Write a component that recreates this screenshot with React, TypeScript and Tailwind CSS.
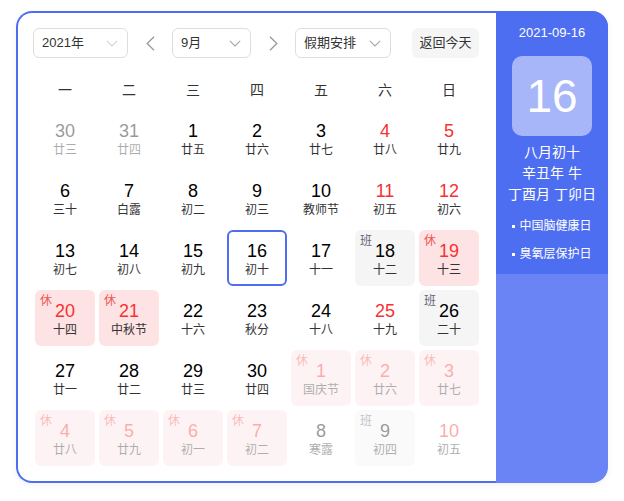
import React from "react";

type Cell = {
  d: number;
  l: string;
  red?: boolean;
  other?: boolean;
  tag?: "休" | "班";
  today?: boolean;
};

const cells: Cell[] = [
  { d: 30, l: "廿三", other: true },
  { d: 31, l: "廿四", other: true },
  { d: 1, l: "廿五" },
  { d: 2, l: "廿六" },
  { d: 3, l: "廿七" },
  { d: 4, l: "廿八", red: true },
  { d: 5, l: "廿九", red: true },
  { d: 6, l: "三十" },
  { d: 7, l: "白露" },
  { d: 8, l: "初二" },
  { d: 9, l: "初三" },
  { d: 10, l: "教师节" },
  { d: 11, l: "初五", red: true },
  { d: 12, l: "初六", red: true },
  { d: 13, l: "初七" },
  { d: 14, l: "初八" },
  { d: 15, l: "初九" },
  { d: 16, l: "初十", today: true },
  { d: 17, l: "十一" },
  { d: 18, l: "十二", tag: "班" },
  { d: 19, l: "十三", tag: "休" },
  { d: 20, l: "十四", tag: "休" },
  { d: 21, l: "中秋节", tag: "休" },
  { d: 22, l: "十六" },
  { d: 23, l: "秋分" },
  { d: 24, l: "十八" },
  { d: 25, l: "十九", red: true },
  { d: 26, l: "二十", tag: "班" },
  { d: 27, l: "廿一" },
  { d: 28, l: "廿二" },
  { d: 29, l: "廿三" },
  { d: 30, l: "廿四" },
  { d: 1, l: "国庆节", tag: "休", other: true },
  { d: 2, l: "廿六", tag: "休", other: true },
  { d: 3, l: "廿七", tag: "休", other: true },
  { d: 4, l: "廿八", tag: "休", other: true },
  { d: 5, l: "廿九", tag: "休", other: true },
  { d: 6, l: "初一", tag: "休", other: true },
  { d: 7, l: "初二", tag: "休", other: true },
  { d: 8, l: "寒露", other: true },
  { d: 9, l: "初四", tag: "班", other: true },
  { d: 10, l: "初五", red: true, other: true },
];

const weekdays = ["一", "二", "三", "四", "五", "六", "日"];

function ChevronDown({ light }: { light?: boolean }) {
  return (
    <svg width="12" height="7" viewBox="0 0 12 7" fill="none">
      <path
        d="M0.8 0.8 L6 6 L11.2 0.8"
        stroke={light ? "#d4d4d4" : "#a6a6a6"}
        strokeWidth="1.1"
      />
    </svg>
  );
}

function Arrow({ dir }: { dir: "l" | "r" }) {
  return (
    <svg width="9" height="15" viewBox="0 0 9 15" fill="none">
      <path
        d={dir === "l" ? "M8 0.8 L1.2 7.5 L8 14.2" : "M1 0.8 L7.8 7.5 L1 14.2"}
        stroke="#9a9a9a"
        strokeWidth="1.3"
      />
    </svg>
  );
}

function Select({ label, width, light }: { label: string; width: string; light?: boolean }) {
  return (
    <div
      className={`${width} h-[30px] flex items-center justify-between pl-[8px] pr-[9px] border border-[#dedede] rounded-[6px] text-[13px] text-[#333] bg-white`}
    >
      <span>{label}</span>
      <ChevronDown light={light} />
    </div>
  );
}

function DayCell({ c }: { c: Cell }) {
  let bg = "";
  if (c.tag === "休") bg = "bg-[#fde3e4]";
  else if (c.tag === "班") bg = "bg-[#f5f5f6]";
  const numColor = c.red || c.tag === "休" ? "text-[#f73131]" : "text-black";
  return (
    <div
      className={`relative h-[56px] rounded-[6px] flex flex-col items-center justify-center pt-[2px] ${bg} ${
        c.today ? "border-2 border-[#4e6ef2]" : ""
      } ${c.other ? "opacity-40" : ""}`}
    >
      {c.tag && (
        <span
          className={`absolute left-[5px] top-[3px] text-[12px] leading-[16px] ${
            c.tag === "休" ? "text-[#f25555]" : "text-[#626675]"
          }`}
        >
          {c.tag}
        </span>
      )}
      <span className={`text-[18px] leading-[22px] ${numColor}`}>{c.d}</span>
      <span className="text-[12px] leading-[16px] text-[#333]">{c.l}</span>
    </div>
  );
}

export default function App() {
  return (
    <div
      className="w-[624px] h-[501px] bg-white pt-[11px]"
      style={{ fontFamily: '"Liberation Sans", "Noto Sans CJK SC", sans-serif' }}
    >
      <div className="mx-auto w-[592px] h-[472px] flex rounded-[16px] shadow-[0_2px_6px_rgba(0,0,0,0.06)]">
        <div className="w-[480px] h-full border-2 border-r-0 border-[#4e6ef2] rounded-l-[16px] px-[15px] pt-[15px] pb-[15px] flex flex-col">
          <div className="flex items-center h-[30px] pr-[2px]">
            <Select label="2021年" width="w-[95px]" light />
            <div className="w-[44px] flex justify-center">
              <Arrow dir="l" />
            </div>
            <Select label="9月" width="w-[79px]" />
            <div className="w-[44px] flex justify-center">
              <Arrow dir="r" />
            </div>
            <Select label="假期安排" width="w-[96px]" />
            <div className="ml-auto w-[67px] h-[30px] rounded-[6px] bg-[#f5f5f6] text-[13px] text-[#333] flex items-center justify-center">
              返回今天
            </div>
          </div>
          <div className="mt-[12px] h-[40px] px-[2px] grid grid-cols-7 gap-x-[4px] items-center">
            {weekdays.map((w) => (
              <div key={w} className="text-center text-[14px] text-[#333]">
                {w}
              </div>
            ))}
          </div>
          <div className="px-[2px] grid grid-cols-7 gap-[4px]">
            {cells.map((c, i) => (
              <DayCell key={i} c={c} />
            ))}
          </div>
        </div>
        <div className="w-[112px] h-full rounded-r-[16px] overflow-hidden flex flex-col bg-[#6a84f5]">
          <div className="bg-[#4e6ef2] flex flex-col items-center pt-[13px] pb-[6px] text-white">
            <div className="text-[13px] leading-[18px]">2021-09-16</div>
            <div className="mt-[14px] w-[80px] h-[80px] rounded-[10px] bg-[#a6b6f9] flex items-center justify-center text-[46px] leading-none">
              16
            </div>
            <div className="mt-[6px] text-[14px] leading-[21px] text-center">
              <div>八月初十</div>
              <div>辛丑年 牛</div>
              <div>丁酉月 丁卯日</div>
            </div>
            <div className="mt-[7px] text-[12px] leading-[28px]">
              <div className="flex items-center">
                <span className="w-[3px] h-[3px] bg-white mr-[4px]" />
                中国脑健康日
              </div>
              <div className="flex items-center">
                <span className="w-[3px] h-[3px] bg-white mr-[4px]" />
                臭氧层保护日
              </div>
            </div>
          </div>
          <div className="flex-1" />
        </div>
      </div>
    </div>
  );
}
